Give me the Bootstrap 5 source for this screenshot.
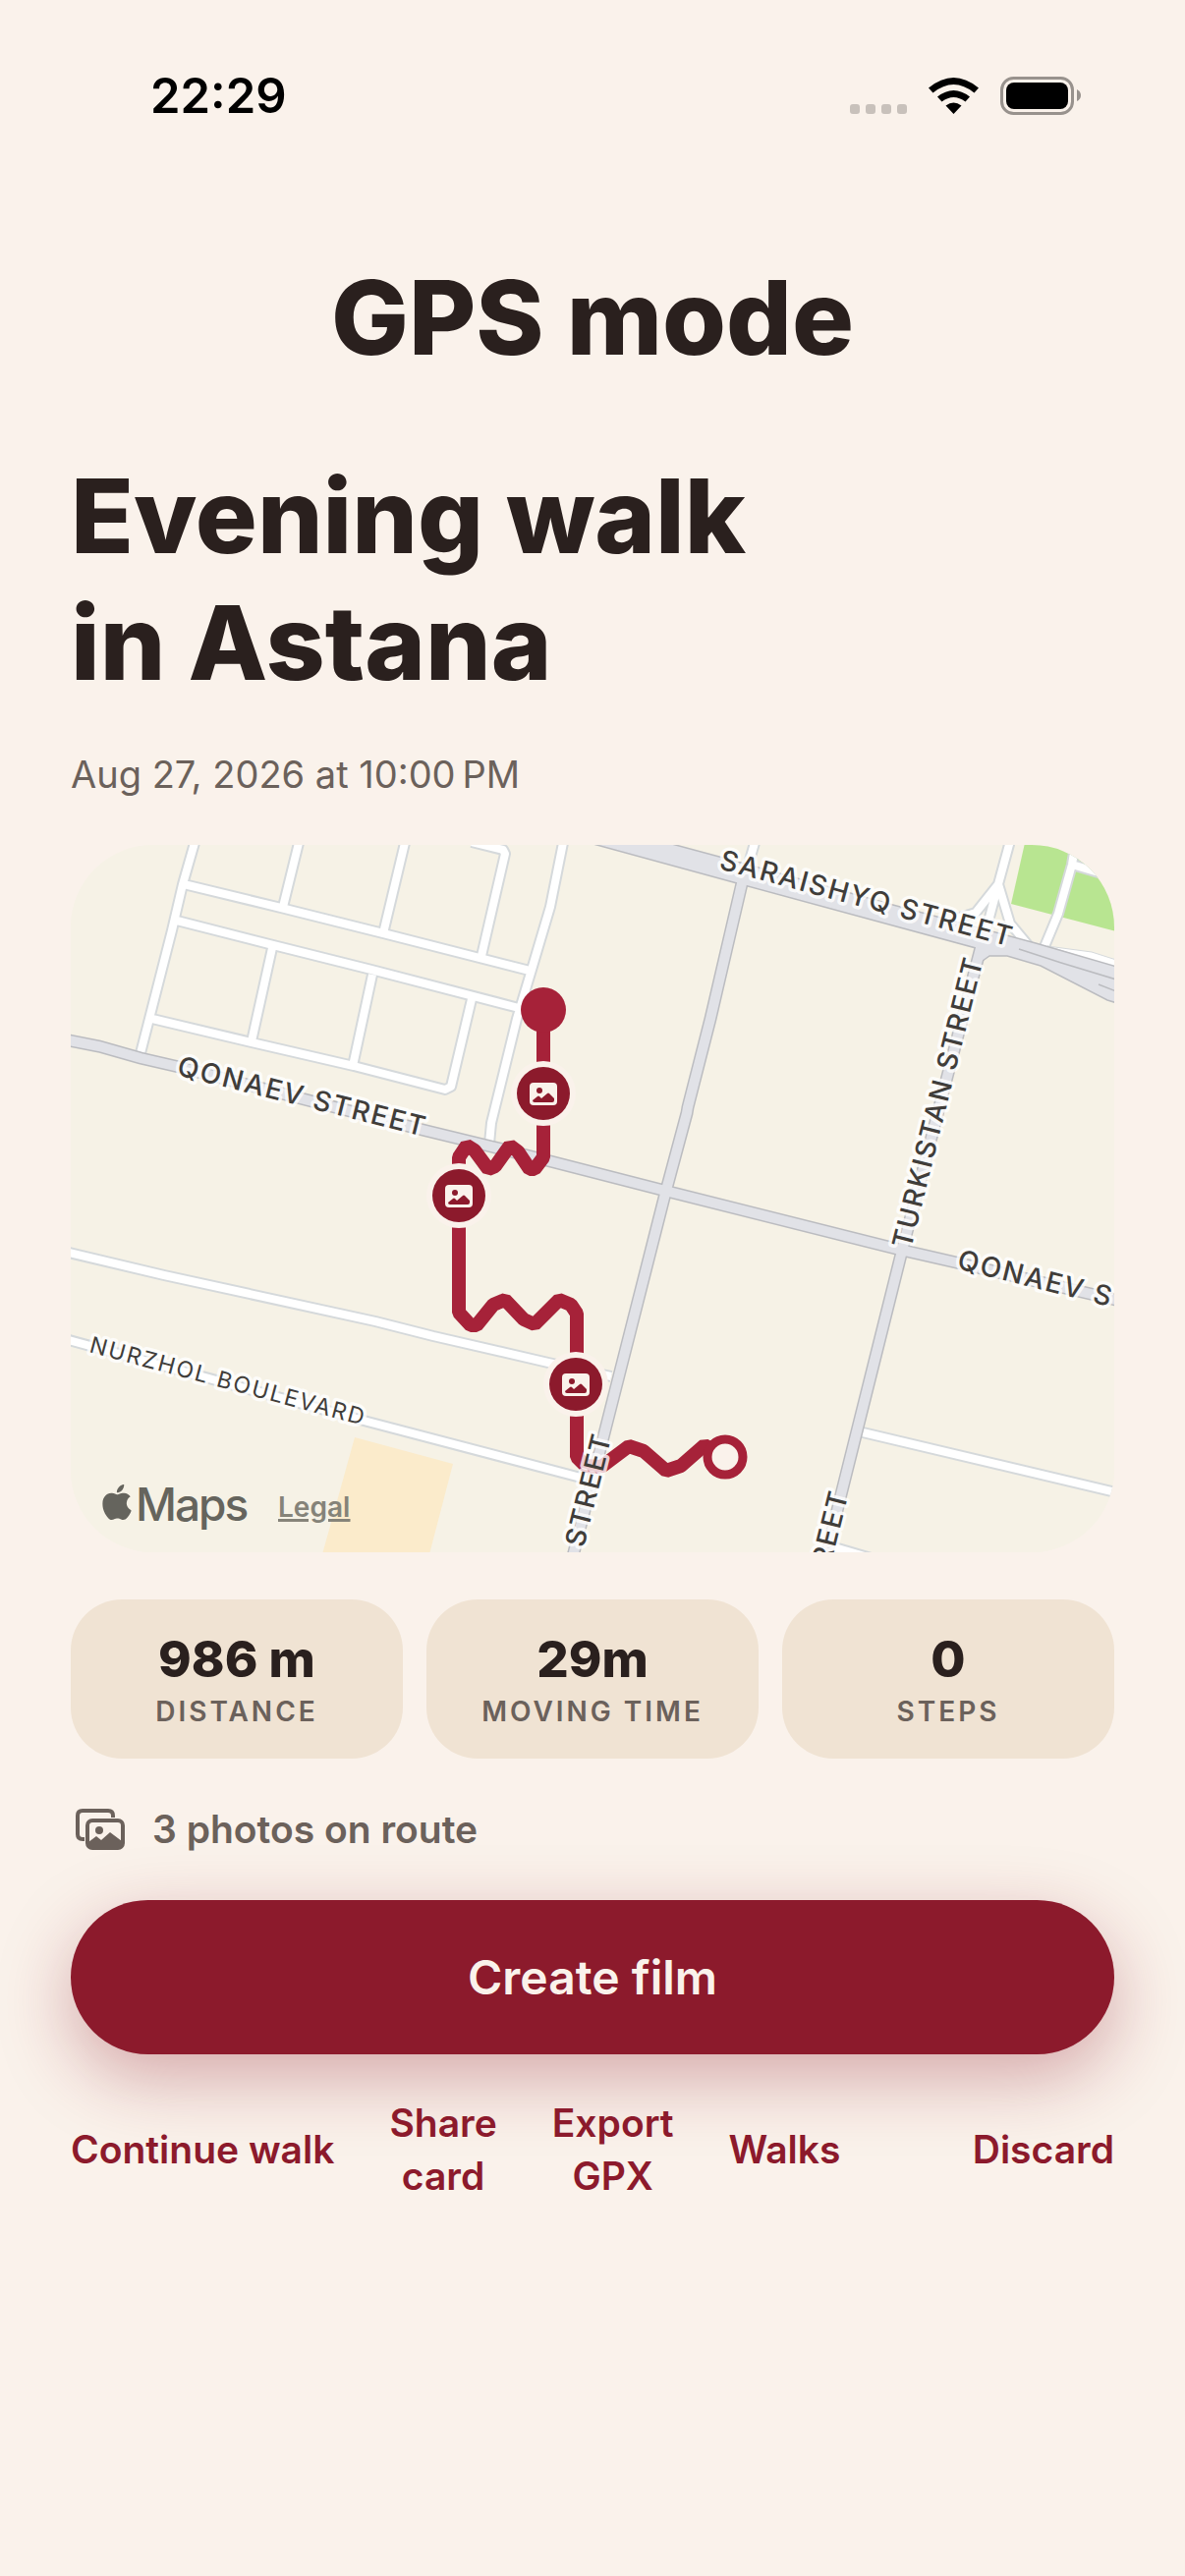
<!DOCTYPE html>
<html lang="en">
<head>
<meta charset="utf-8">
<meta name="viewport" content="width=device-width, initial-scale=1">
<title>GPS mode</title>
<link href="https://cdn.jsdelivr.net/npm/bootstrap@5.3.0/dist/css/bootstrap.min.css" rel="stylesheet">
<style>
  :root { --wine: #8c1a2c; --ink: #2a201e; --soft: #6b615b; --paper: #faf2eb; }
  body { background: var(--paper); color: var(--ink); font-family: Inter, "Liberation Sans", sans-serif; font-size: 38px; line-height: 54px; }
  .screen { padding: 68px 72px; }
  .statusbar { padding: 0 33px 0 81px; margin-bottom: 130px; color: #000; }
  .clock { font-size: 49px; line-height: 60px; font-weight: 600; }
  .title { font-size: 105px; line-height: 129px; font-weight: 800; margin: 0; }
  .walk-name { margin-top: 73px; margin-bottom: 43px; }
  .muted { color: var(--soft); }
  .map { margin: 45px 0 48px; border-radius: 84px; overflow: hidden; background: #f6f2e6; }
  .map svg { display: block; width: 100%; height: auto; }
  .local-edge { fill: none; stroke: #d5d9db; stroke-width: 12; stroke-linejoin: round; }
  .local-fill { fill: none; stroke: #fff; stroke-width: 8; stroke-linejoin: round; }
  .main-edge { fill: none; stroke: #bbbcc0; stroke-width: 13; }
  .main-fill { fill: none; stroke: #e1e2e7; stroke-width: 10; }
  .street { font-size: 28px; font-weight: 500; letter-spacing: 2px; fill: #403d3a; stroke: #fff; stroke-opacity: .8; stroke-width: 7; stroke-linejoin: round; paint-order: stroke; }
  .street-minor { font-size: 23px; font-weight: 400; }
  .tiles { gap: 24px; }
  .tile { background: #f0e3d3; border-radius: 52px; padding: 31px 12px 30px; }
  .tile-value { font-size: 51px; line-height: 60px; font-weight: 800; }
  .tile-label { font-size: 28px; line-height: 36px; font-weight: 600; letter-spacing: 3px; margin-top: 5px; }
  .photos { gap: 28px; margin: 45px 0; padding-left: 5px; font-size: 39px; font-weight: 600; }
  .create { background: var(--wine); color: var(--paper); font-size: 48px; line-height: 61px; font-weight: 600; padding: 48px; border: 0; border-radius: 79px; box-shadow: 0 24px 72px rgba(140, 26, 44, .34); }
  .create:hover { background: #7a1525; color: var(--paper); }
  .actions { margin-top: 43px; gap: 56px; }
  .actions .btn { color: var(--wine); font-size: 39px; line-height: 54px; font-weight: 600; }
</style>
</head>
<body>
<div class="screen">
  <header class="statusbar d-flex justify-content-between align-items-center">
    <span class="clock">22:29</span>
    <svg width="236" height="40" viewBox="865 78 236 40" aria-hidden="true">
      <g fill="#c8c1bb"><rect x="865" y="106" width="10" height="10" rx="3"/><rect x="881" y="106" width="10" height="10" rx="3"/><rect x="897" y="106" width="10" height="10" rx="3"/><rect x="913" y="106" width="10" height="10" rx="3"/></g>
      <path d="M945 89.500Q970.500 68.500 996 89.500L991.500 94.500Q970.500 77.500 949.500 94.500ZM954 98.500Q970.500 85.500 987 98.500L982.500 103.500Q970.500 94.500 958.500 103.500ZM962.500 107.500Q970.500 101.500 978.500 107.500L970.500 116Z"/>
      <rect x="1019.500" y="79.500" width="72" height="36" rx="12" fill="none" stroke="#98928d" stroke-width="3"/>
      <rect x="1024" y="84" width="63" height="27" rx="8"/>
      <path d="M1096 91q4 2 4 6t-4 6z" fill="#98928d"/>
    </svg>
  </header>
  <h1 class="title text-center">GPS mode</h1>
  <h2 class="title walk-name">Evening walk<br>in Astana</h2>
  <div class="muted">Aug 27, 2026 at 10:00&thinsp;PM</div>

  <div class="map">
    <svg viewBox="72 860 1062 720" role="img" aria-label="Map of the walk route">
      <defs>
        <path id="local" d="M198 858L186 900L175 947L143 1072M304 858L288 923M412 858L390 950M480 857L512 865L514 869L490 973M573 858L560 923L541 987L526 1037L500 1143L498 1164M187 900L286 924L390 950L539 988M180 937L278 962L378 987L528 1026M155 1037L256 1061L360 1085L453 1109L459 1106L480 1017M277 965L256 1060M379 992L359 1085M768 858L756 900M70 1275L167 1298L382 1345L441 1360L558 1387L622 1401M70 1364L374 1447L591 1504M878 1458L1140 1520M846 1574L900 1590"/>
        <path id="main" d="M70 1059L101 1065L143 1077L182 1086L430 1150L500 1167L560 1182L677 1212L916 1272L973 1285L1140 1324M756 895L723 1037L700 1127L699 1133L677 1215L630 1400L614 1463L583 1584M998 965L918 1273L855 1525L841 1584"/>
        <path id="ramps" d="M1028 856L1016 900L993 929L970 936M1016 900L1004 945M1016 900L1028 940L1048 964"/>
        <path id="parkroad" d="M1095 856L1091 880L1077 930L1062 966M1091 880L1118 888L1140 897"/>
        <g id="photo">
          <circle r="33" fill="#faf2eb"/><circle r="27" fill="#8c1a2c"/>
          <rect x="-14" y="-11" width="28" height="23" rx="4" fill="#faf2eb"/>
          <circle cx="-4" cy="-3" r="3" fill="#8c1a2c"/>
          <path d="M-11 7L-6 3Q-5 2-4 3L-2 5L4 0Q5-1 6 0L11 5V7Q11 9 9 9H-9Q-11 9-11 7Z" fill="#8c1a2c"/>
        </g>
      </defs>
      <path d="M72 860H1134V1580H72Z" fill="#f6f2e6"/>
      <path d="M1043 858L1029 920L1136 948V858Z" fill="#b8e591"/>
      <path d="M361 1463L461 1490L437 1582H328Z" fill="#fbebcb"/>
      <use href="#local" class="local-edge"/><use href="#local" class="local-fill"/>
      <use href="#ramps" class="local-edge"/><use href="#ramps" class="local-fill"/>
      <use href="#parkroad" class="local-edge"/><use href="#parkroad" class="local-fill"/>
      <path d="M1066 963L1111 969L1136 977V985Z" fill="#fff" stroke="#d5d9db"/>
      <use href="#main" class="main-edge"/>
      <path d="M600 858L750 899L761 902L993 965L1000 978L1007 973H1025L1059 983L1127 1018L1140 1022V985L1054 960L905 920L732 872L680 858Z" fill="#e1e2e7" stroke="#bbbcc0" stroke-width="1.500"/>
      <use href="#main" class="main-fill"/>
      <path d="M1037 966L1080 980L1136 997M1118 1002L1136 1009" fill="none" stroke="#bbbcc0" stroke-width="1.500"/>

      <path d="M553 1028V1178L544 1190H539L527 1172L519 1166L504 1187L497 1190L483 1171L475 1166L467 1178V1336L479 1349H485L502 1328L514 1323L533 1343L544 1348L569 1323L581 1328L587 1337V1483L596 1492L612 1493L640 1472L655 1477L678 1497L693 1492L717 1471L738 1483" fill="none" stroke="#a62239" stroke-width="14" stroke-linejoin="bevel"/>
      <circle cx="553" cy="1028" r="23" fill="#a62239"/>
      <circle cx="738" cy="1483" r="18" fill="#faf2eb" stroke="#a62239" stroke-width="9"/>
      <use href="#photo" x="553" y="1113"/><use href="#photo" x="467" y="1217"/><use href="#photo" x="586" y="1409"/>

      <text class="street" transform="translate(179 1094) rotate(14)">QONAEV STREET</text>
      <text class="street" transform="translate(731 884) rotate(15)">SARAISHYQ STREET</text>
      <text class="street" transform="translate(927 1272) rotate(-76)">TURKISTAN STREET</text>
      <text class="street" transform="translate(973 1291) rotate(14)">QONAEV S</text>
      <text class="street" transform="translate(594 1576) rotate(-76)">STREET</text>
      <text class="street" transform="translate(845 1595) rotate(-76)">REET</text>
      <text class="street street-minor" transform="translate(90 1376) rotate(15)">NURZHOL BOULEVARD</text>

      <path transform="translate(101 1511) scale(2.250)" fill="#65645d" d="M11.182.008C11.148-.03 9.923.023 8.857 1.180c-1.066 1.156-.902 2.482-.878 2.516s1.520.087 2.475-1.258.762-2.391.728-2.430m3.314 11.733c-.048-.096-2.325-1.234-2.113-3.422s1.675-2.789 1.698-2.854-.597-.790-1.254-1.157a3.700 3.700 0 0 0-1.563-.434c-.108-.003-.483-.095-1.254.116-.508.139-1.653.589-1.968.607-.316.018-1.256-.522-2.267-.665-.647-.125-1.333.131-1.824.328-.490.196-1.422.754-2.074 2.237-.652 1.482-.311 3.830-.067 4.560s.625 1.924 1.273 2.796c.576.984 1.340 1.667 1.659 1.899s1.219.386 1.843.067c.502-.308 1.408-.485 1.766-.472.357.013 1.061.154 1.782.539.571.197 1.111.115 1.652-.105.541-.221 1.324-1.059 2.238-2.758q.520-1.185.473-1.282"/>
      <text x="138" y="1548" font-size="46" font-weight="500" letter-spacing="-2" fill="#65645d">Maps</text>
      <a href="#legal"><text x="283" y="1544" font-size="28" font-weight="600" fill="#858379" text-decoration="underline">Legal</text></a>
    </svg>
  </div>

  <div class="tiles d-flex text-center">
    <div class="tile flex-fill w-100"><div class="tile-value">986 m</div><div class="tile-label muted">DISTANCE</div></div>
    <div class="tile flex-fill w-100"><div class="tile-value">29m</div><div class="tile-label muted">MOVING TIME</div></div>
    <div class="tile flex-fill w-100"><div class="tile-value">0</div><div class="tile-label muted">STEPS</div></div>
  </div>

  <div class="photos muted d-flex align-items-center">
    <svg width="50" height="42" viewBox="0 0 50 42" aria-hidden="true">
      <path d="M9 31H7Q2 31 2 26V7Q2 2 7 2H33Q38 2 38 7V9" fill="none" stroke="#6b615b" stroke-width="4"/>
      <rect x="12" y="12" width="36" height="28" rx="5" fill="none" stroke="#6b615b" stroke-width="4"/>
      <circle cx="24" cy="22" r="4" fill="#6b615b"/>
      <path d="M13 34L21 28L26 32L35 24L47 33V37Q47 40 44 40H16Q13 40 13 37Z" fill="#6b615b"/>
    </svg>
    <span>3 photos on route</span>
  </div>

  <button type="button" class="create btn w-100 d-block">Create film</button>

  <div class="actions d-flex align-items-center">
    <button type="button" class="btn border-0 p-0 text-nowrap">Continue walk</button>
    <button type="button" class="btn border-0 p-0">Share<br>card</button>
    <button type="button" class="btn border-0 p-0">Export<br>GPX</button>
    <button type="button" class="btn border-0 p-0">Walks</button>
    <button type="button" class="btn border-0 p-0 ms-auto">Discard</button>
  </div>
</div>
<script src="https://cdn.jsdelivr.net/npm/bootstrap@5.3.0/dist/js/bootstrap.bundle.min.js"></script>
</body>
</html>
